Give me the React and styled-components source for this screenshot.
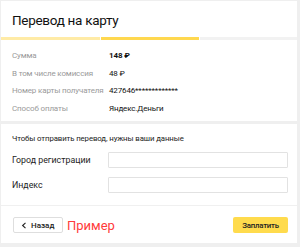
import React from "react";
import styled, { createGlobalStyle } from "styled-components";

const GlobalStyle = createGlobalStyle`
  html, body {
    margin: 0;
    padding: 0;
    background: #efefef;
    font-family: Roboto, "Liberation Sans", Arial, sans-serif;
    color: #000;
  }
  * { box-sizing: border-box; }
`;

const steps = ["done", "active", "todo"];

const details = [
  { label: "Сумма", value: "148 ₽", bold: true },
  { label: "В том числе комиссия", value: "48 ₽" },
  { label: "Номер карты получателя", value: "427646*************" },
  { label: "Способ оплаты", value: "Яндекс.Деньги" },
];

function App() {
  return (
    <Page>
      <GlobalStyle />
      <Card>
        <Title>Перевод на карту</Title>
        <Progress>
          {steps.map((s) => (
            <Step key={s} $state={s} />
          ))}
        </Progress>
        <Details>
          {details.map((d) => (
            <DetailRow key={d.label}>
              <DetailLabel>{d.label}</DetailLabel>
              <DetailValue $bold={d.bold}>{d.value}</DetailValue>
            </DetailRow>
          ))}
        </Details>
      </Card>
      <Card>
        <Form>
          <Hint>Чтобы отправить перевод, нужны ваши данные</Hint>
          <FieldRow>
            <FieldLabel>Город регистрации</FieldLabel>
            <Input />
          </FieldRow>
          <FieldRow>
            <FieldLabel>Индекс</FieldLabel>
            <Input />
          </FieldRow>
        </Form>
        <Footer>
          <BackButton>
            <svg width="6" height="7" viewBox="0 0 6 7">
              <path d="M4.5 0.8 L1.6 3.5 L4.5 6.2" fill="none" stroke="#222" strokeWidth="1.1" />
            </svg>
            Назад
          </BackButton>
          <Sample>Пример</Sample>
          <PayButton>Заплатить</PayButton>
        </Footer>
      </Card>
    </Page>
  );
}

export default App;

const Page = styled.div`
  display: flex;
  flex-direction: column;
  gap: 3px;
  width: 300px;
  height: 247px;
  padding: 1px 3px 4px 1px;
  background: #efefef;
`;

const Card = styled.div`
  display: flex;
  flex-direction: column;
  background: #fff;
`;

const Title = styled.h1`
  margin: 0;
  padding: 10px 11px 8px;
  font-size: 13.5px;
  letter-spacing: -0.3px;
  line-height: 18px;
  font-weight: normal;
  color: #111;
  white-space: nowrap;
`;

const Progress = styled.div`
  display: grid;
  grid-template-columns: 99px 98px 1fr;
  gap: 1px;
  height: 3px;
`;

const Step = styled.div`
  background: ${(p) =>
    p.$state === "done" ? "#ffeba6" : p.$state === "active" ? "#ffd84f" : "#f2f2f2"};
`;

const Details = styled.div`
  display: flex;
  flex-direction: column;
  padding: 7px 11px 4px;
`;

const DetailRow = styled.div`
  display: grid;
  grid-template-columns: 97px 1fr;
  align-items: center;
  height: 17.5px;
  font-size: 8px;
  letter-spacing: -0.15px;
  white-space: nowrap;
`;

const DetailLabel = styled.span`
  color: #9a9a9a;
`;

const DetailValue = styled.span`
  color: #111;
  font-weight: ${(p) => (p.$bold ? "bold" : "normal")};
`;

const Form = styled.div`
  display: flex;
  flex-direction: column;
  gap: 9px;
  padding: 9px 9px 12px 11px;
  border-bottom: 1px solid #f0f0f0;
`;

const Hint = styled.div`
  font-size: 7.8px;
  letter-spacing: -0.1px;
  line-height: 12px;
  color: #222;
  margin-bottom: -2px;
  white-space: nowrap;
`;

const FieldRow = styled.div`
  display: grid;
  grid-template-columns: 96px 1fr;
  align-items: center;
`;

const FieldLabel = styled.span`
  font-size: 8.8px;
  color: #222;
  white-space: nowrap;
`;

const Input = styled.div`
  height: 16px;
  border: 1px solid #e2e2e2;
  border-radius: 1px;
  background: #fff;
`;

const Footer = styled.div`
  display: flex;
  align-items: center;
  padding: 11px 9px 10px 12px;
`;

const BackButton = styled.div`
  display: flex;
  align-items: center;
  gap: 4px;
  width: 50px;
  height: 16px;
  padding-left: 7px;
  border: 1px solid #dedede;
  border-radius: 2px;
  font-size: 8px;
  font-weight: 500;
  color: #222;
`;

const Sample = styled.span`
  margin-left: 4px;
  font-size: 13px;
  color: #ff3b3b;
`;

const PayButton = styled.div`
  display: flex;
  align-items: center;
  justify-content: center;
  margin-left: auto;
  width: 55px;
  height: 16px;
  border-radius: 2px;
  background: #ffdb4d;
  font-size: 7.8px;
  letter-spacing: -0.2px;
  font-weight: 500;
  color: #222;
`;
